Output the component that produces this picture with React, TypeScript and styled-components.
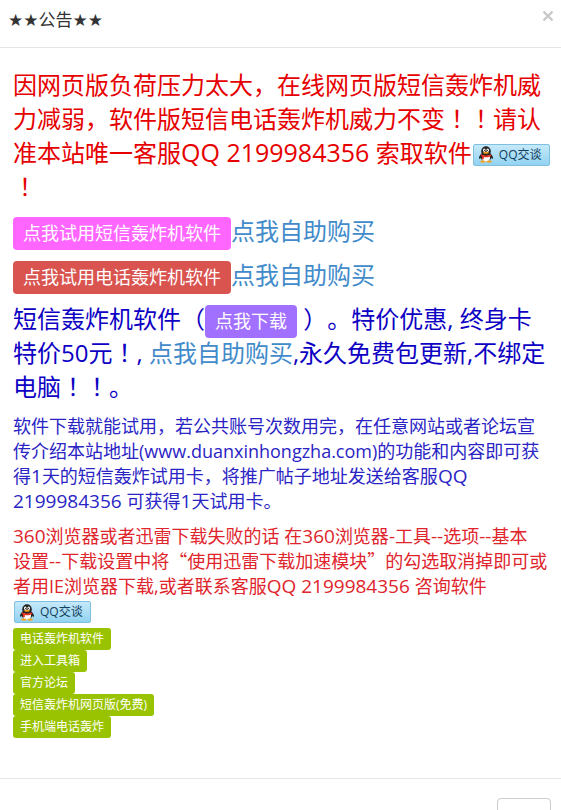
import React from "react";
import styled, { createGlobalStyle } from "styled-components";

const GlobalStyle = createGlobalStyle`
  *, *::before, *::after { box-sizing: border-box; }
  body {
    margin: 0;
    background: #fff;
    color: #333;
    font-family: "Open Sans", "Noto Sans CJK SC", sans-serif;
    font-size: 14px;
    text-spacing-trim: space-all;
    overflow-x: hidden;
    scrollbar-width: none;
  }
`;

const Header = styled.header`
  display: flex;
  justify-content: space-between;
  align-items: flex-start;
  height: 48px;
  padding: 8px 7px 0 8px;
  border-bottom: 1px solid #e5e5e5;
`;

const Title = styled.h4`
  margin: 0;
  font: 400 17px/25px "DejaVu Sans", "Noto Sans CJK SC", sans-serif;
`;

const Close = styled.button`
  display: flex;
  margin: 2px 0 0;
  padding: 0;
  border: 0;
  background: none;
  color: #c8c8c8;
`;

const Body = styled.main`
  padding: 20px 9px 40px 13px;
`;

const Notice = styled.p<{ $color: string; $small?: boolean }>`
  margin: 0 0 10px;
  color: ${(p) => p.$color};
  font-size: ${(p) => (p.$small ? 18 : 24)}px;
  line-height: ${(p) => (p.$small ? 25 : 34)}px;
`;

const Row = styled.div`
  display: flex;
  align-items: flex-start;
  margin-bottom: 8px;
  font-size: 24px;
  line-height: 34px;
`;

const Mid = styled.span`
  font-family: "Noto Sans CJK TC", sans-serif;
  line-height: 0;
`;

const Quote = styled.span`
  font-family: "Noto Sans CJK SC", sans-serif;
  line-height: 0;
`;

const Num = styled.span<{ $small?: boolean }>`
  font-size: ${(p) => (p.$small ? 19 : 25)}px;
  line-height: 0;
`;

const Link = styled.a`
  color: #428bca;
  text-decoration: none;
`;

const Action = styled.a<{ $color: string }>`
  display: inline-block;
  height: 33px;
  margin-top: 3px;
  padding: 0 10px;
  border-radius: 4px;
  background: ${(p) => p.$color};
  color: #fff;
  font-size: 18px;
  line-height: 33px;
  text-decoration: none;

  ${Notice} & {
    margin: -3px 0;
    vertical-align: middle;
  }
`;

const Chat = styled.a`
  display: inline-flex;
  align-items: center;
  gap: 5px;
  width: 77px;
  height: 22px;
  margin: 0 0 2px 1px;
  padding-left: 4px;
  border: 1px solid #7fbfdf;
  border-radius: 2px;
  background: linear-gradient(#c5e9fa, #92d3f1);
  color: #12405c;
  font-size: 12px;
  line-height: 20px;
  text-decoration: none;
  white-space: nowrap;
  vertical-align: middle;
`;

const Tags = styled.nav`
  display: flex;
  flex-direction: column;
  align-items: flex-start;
  margin-top: -7px;
`;

const Tag = styled.a`
  height: 22px;
  padding: 0 7px;
  border-radius: 3px;
  background: #99c300;
  color: #fff;
  font-size: 12px;
  line-height: 21px;
  text-decoration: none;
`;

const Footer = styled.footer`
  display: flex;
  justify-content: flex-end;
  padding: 19px 10px 20px;
  border-top: 1px solid #e5e5e5;
`;

const FooterButton = styled.button`
  width: 54px;
  height: 34px;
  padding: 0;
  border: 1px solid #ccc;
  border-radius: 4px;
  background: #fff;
`;

const QQChat = () => (
  <Chat href="#chat">
    <svg width="16" height="17" viewBox="0 0 16 17" aria-hidden="true">
      <path d="M3.6 7.5C1.4 9.5.5 11.6 1.2 12.7c.5.5 1.3-.3 1.8-1.2h10c.5.9 1.3 1.7 1.8 1.2.7-1.1-.2-3.2-2.4-5.2z" fill="#222" />
      <ellipse cx="8" cy="10.6" rx="5.4" ry="5" fill="#252525" />
      <ellipse cx="8" cy="11.6" rx="4" ry="4.2" fill="#fff" />
      <ellipse cx="8" cy="5.2" rx="4.8" ry="5" fill="#252525" />
      <ellipse cx="6.3" cy="4.2" rx="1.3" ry="1.7" fill="#fff" />
      <ellipse cx="9.7" cy="4.2" rx="1.3" ry="1.7" fill="#fff" />
      <circle cx="6.7" cy="4.4" r=".6" fill="#111" />
      <circle cx="9.3" cy="4.4" r=".6" fill="#111" />
      <ellipse cx="8" cy="6.8" rx="2.9" ry="1" fill="#f5a51d" />
      <path d="M3 8.2c3 1.7 7 1.7 10 0l.4 1.7c-2.5 1.4-5.4 1.6-7.6 1.1v2.3l-2-.3.2-2.6L2.7 9.8z" fill="#e2311f" />
      <ellipse cx="4.8" cy="15.6" rx="2.7" ry="1.2" fill="#f5a51d" />
      <ellipse cx="11.2" cy="15.6" rx="2.7" ry="1.2" fill="#f5a51d" />
    </svg>
    QQ交谈
  </Chat>
);

const tags = ["电话轰炸机软件", "进入工具箱", "官方论坛", "短信轰炸机网页版(免费)", "手机端电话轰炸"];

export default function App() {
  return (
    <>
      <GlobalStyle />
      <Header>
        <Title>★★公告★★</Title>
        <Close type="button" aria-label="关闭">
          <svg width="12" height="12" viewBox="0 0 12 12" aria-hidden="true">
            <path d="M1.5 1.5l9 9M10.5 1.5l-9 9" stroke="currentColor" strokeWidth="2.4" />
          </svg>
        </Close>
      </Header>
      <Body>
        <Notice $color="#e60000">
          因网页版负荷压力太大，在线网页版短信轰炸机威力减弱，软件版短信电话轰炸机威力不变<Mid>！！</Mid>请认准本站唯一客服<Num>QQ 2199984356 </Num>索取软件<QQChat />
          <br />
          <Mid>！</Mid>
        </Notice>
        <Row>
          <Action $color="#ff66ff" href="#sms">点我试用短信轰炸机软件</Action>
          <Link href="#buy">点我自助购买</Link>
        </Row>
        <Row>
          <Action $color="#d9534f" href="#phone">点我试用电话轰炸机软件</Action>
          <Link href="#buy">点我自助购买</Link>
        </Row>
        <Notice $color="#0d00c4">
          短信轰炸机软件（<Action $color="#a270ff" href="#download">点我下载</Action> ）。特价优惠, 终身卡特价50元<Mid>！</Mid>, <Link href="#buy">点我自助购买</Link>,永久免费包更新,不绑定电脑<Mid>！！</Mid>。
        </Notice>
        <Notice $color="#2a24c4" $small>
          软件下载就能试用，若公共账号次数用完，在任意网站或者论坛宣传介绍本站地址(www.duanxinhongzha.com)的功能和内容即可获得<Num $small>1</Num>天的短信轰炸试用卡，将推广帖子地址发送给客服<Num $small>QQ 2199984356 </Num>可获得<Num $small>1</Num>天试用卡。
        </Notice>
        <Notice $color="#e0242c" $small>
          <Num $small>360</Num>浏览器或者迅雷下载失败的话 在<Num $small>360</Num>浏览器<Num $small>-</Num>工具<Num $small>--</Num>选项<Num $small>--</Num>基本
          <br />
          设置<Num $small>--</Num>下载设置中将<Quote>“</Quote>使用迅雷下载加速模块<Quote>”</Quote>的勾选取消掉即可或者用IE浏览器下载,或者联系客服<Num $small>QQ 2199984356 </Num>咨询软件
          <br />
          <QQChat />
        </Notice>
        <Tags aria-label="软件链接">
          {tags.map((tag) => (
            <Tag key={tag} href="#tools">{tag}</Tag>
          ))}
        </Tags>
      </Body>
      <Footer>
        <FooterButton type="button" aria-label="关闭" />
      </Footer>
    </>
  );
}
